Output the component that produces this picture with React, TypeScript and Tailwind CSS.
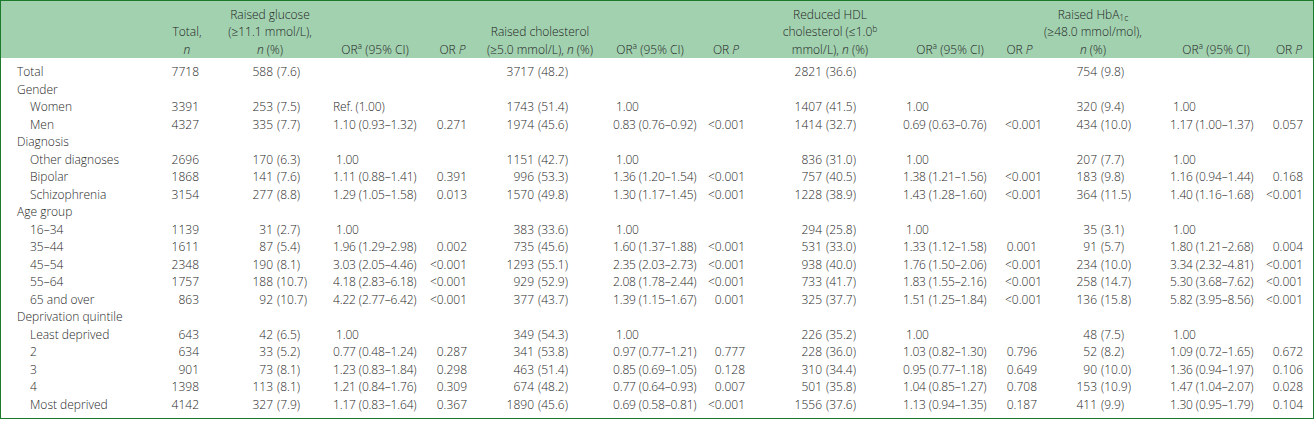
import type { ReactNode } from 'react';

type Kind = 'n' | 'np' | 'or' | 'p';

const OR = (
  <>
    OR<sup className="text-[8.5px]">a</sup> (95% CI)
  </>
);
const ORP = (
  <>
    OR <i>P</i>
  </>
);

// column widths live in the grid template; these hold per-column offsets
const cols: { head: ReactNode; hd: string; kind: Kind; cls: string }[] = [
  { head: <>Total,<br /><i>n</i></>, hd: '', kind: 'n', cls: 'text-right pr-[7px]' },
  { head: <>Raised glucose<br />(≥11.1 mmol/L),<br /><i>n</i> (%)</>, hd: 'pl-[4px]', kind: 'np', cls: 'pl-[27px]' },
  { head: OR, hd: 'pr-[5px]', kind: 'or', cls: 'pl-[3px]' },
  { head: ORP, hd: '', kind: 'p', cls: 'text-right pr-[13px]' },
  { head: <>Raised cholesterol<br />(≥5.0 mmol/L), <i>n</i> (%)</>, hd: '', kind: 'np', cls: 'pl-[14px]' },
  { head: OR, hd: '', kind: 'or', cls: 'pl-[13px]' },
  { head: ORP, hd: 'pr-[10px]', kind: 'p', cls: 'text-right pr-[17px]' },
  { head: <>Reduced HDL<br />cholesterol (≤1.0<sup className="text-[8.5px]">b</sup><br />mmol/L), <i>n</i> (%)</>, hd: 'pl-[8px]', kind: 'np', cls: 'pl-[20px]' },
  { head: OR, hd: 'pl-[5px]', kind: 'or', cls: 'pl-[13px]' },
  { head: ORP, hd: 'pr-[16px]', kind: 'p', cls: 'text-right pr-[13px]' },
  { head: <>Raised HbA<sub className="text-[8.5px]">1c</sub><br />(≥48.0 mmol/mol),<br /><i>n</i> (%)</>, hd: 'pr-[24px]', kind: 'np', cls: 'pl-[7px]' },
  { head: OR, hd: 'pl-[7px]', kind: 'or', cls: 'pl-[10px]' },
  { head: ORP, hd: '', kind: 'p', cls: 'text-right pr-[10px]' },
];

type Row = { label: string; sub?: boolean; v?: string[] };

const rows: Row[] = [
  { label: 'Total', v: ['7718', '588 (7.6)', '', '', '3717 (48.2)', '', '', '2821 (36.6)', '', '', '754 (9.8)', '', ''] },
  { label: 'Gender' },
  { label: 'Women', sub: true, v: ['3391', '253 (7.5)', 'Ref. (1.00)', '', '1743 (51.4)', '1.00', '', '1407 (41.5)', '1.00', '', '320 (9.4)', '1.00', ''] },
  { label: 'Men', sub: true, v: ['4327', '335 (7.7)', '1.10 (0.93–1.32)', '0.271', '1974 (45.6)', '0.83 (0.76–0.92)', '<0.001', '1414 (32.7)', '0.69 (0.63–0.76)', '<0.001', '434 (10.0)', '1.17 (1.00–1.37)', '0.057'] },
  { label: 'Diagnosis' },
  { label: 'Other diagnoses', sub: true, v: ['2696', '170 (6.3)', '1.00', '', '1151 (42.7)', '1.00', '', '836 (31.0)', '1.00', '', '207 (7.7)', '1.00', ''] },
  { label: 'Bipolar', sub: true, v: ['1868', '141 (7.6)', '1.11 (0.88–1.41)', '0.391', '996 (53.3)', '1.36 (1.20–1.54)', '<0.001', '757 (40.5)', '1.38 (1.21–1.56)', '<0.001', '183 (9.8)', '1.16 (0.94–1.44)', '0.168'] },
  { label: 'Schizophrenia', sub: true, v: ['3154', '277 (8.8)', '1.29 (1.05–1.58)', '0.013', '1570 (49.8)', '1.30 (1.17–1.45)', '<0.001', '1228 (38.9)', '1.43 (1.28–1.60)', '<0.001', '364 (11.5)', '1.40 (1.16–1.68)', '<0.001'] },
  { label: 'Age group' },
  { label: '16–34', sub: true, v: ['1139', '31 (2.7)', '1.00', '', '383 (33.6)', '1.00', '', '294 (25.8)', '1.00', '', '35 (3.1)', '1.00', ''] },
  { label: '35–44', sub: true, v: ['1611', '87 (5.4)', '1.96 (1.29–2.98)', '0.002', '735 (45.6)', '1.60 (1.37–1.88)', '<0.001', '531 (33.0)', '1.33 (1.12–1.58)', '0.001', '91 (5.7)', '1.80 (1.21–2.68)', '0.004'] },
  { label: '45–54', sub: true, v: ['2348', '190 (8.1)', '3.03 (2.05–4.46)', '<0.001', '1293 (55.1)', '2.35 (2.03–2.73)', '<0.001', '938 (40.0)', '1.76 (1.50–2.06)', '<0.001', '234 (10.0)', '3.34 (2.32–4.81)', '<0.001'] },
  { label: '55–64', sub: true, v: ['1757', '188 (10.7)', '4.18 (2.83–6.18)', '<0.001', '929 (52.9)', '2.08 (1.78–2.44)', '<0.001', '733 (41.7)', '1.83 (1.55–2.16)', '<0.001', '258 (14.7)', '5.30 (3.68–7.62)', '<0.001'] },
  { label: '65 and over', sub: true, v: ['863', '92 (10.7)', '4.22 (2.77–6.42)', '<0.001', '377 (43.7)', '1.39 (1.15–1.67)', '0.001', '325 (37.7)', '1.51 (1.25–1.84)', '<0.001', '136 (15.8)', '5.82 (3.95–8.56)', '<0.001'] },
  { label: 'Deprivation quintile' },
  { label: 'Least deprived', sub: true, v: ['643', '42 (6.5)', '1.00', '', '349 (54.3)', '1.00', '', '226 (35.2)', '1.00', '', '48 (7.5)', '1.00', ''] },
  { label: '2', sub: true, v: ['634', '33 (5.2)', '0.77 (0.48–1.24)', '0.287', '341 (53.8)', '0.97 (0.77–1.21)', '0.777', '228 (36.0)', '1.03 (0.82–1.30)', '0.796', '52 (8.2)', '1.09 (0.72–1.65)', '0.672'] },
  { label: '3', sub: true, v: ['901', '73 (8.1)', '1.23 (0.83–1.84)', '0.298', '463 (51.4)', '0.85 (0.69–1.05)', '0.128', '310 (34.4)', '0.95 (0.77–1.18)', '0.649', '90 (10.0)', '1.36 (0.94–1.97)', '0.106'] },
  { label: '4', sub: true, v: ['1398', '113 (8.1)', '1.21 (0.84–1.76)', '0.309', '674 (48.2)', '0.77 (0.64–0.93)', '0.007', '501 (35.8)', '1.04 (0.85–1.27)', '0.708', '153 (10.9)', '1.47 (1.04–2.07)', '0.028'] },
  { label: 'Most deprived', sub: true, v: ['4142', '327 (7.9)', '1.17 (0.83–1.64)', '0.367', '1890 (45.6)', '0.69 (0.58–0.81)', '<0.001', '1556 (37.6)', '1.13 (0.94–1.35)', '0.187', '411 (9.9)', '1.30 (0.95–1.79)', '0.104'] },
];

const grid =
  'grid grid-cols-[167px_38px_124px_95px_55px_120px_100px_62px_128px_115px_45px_110px_105px_48px]';

function Cell({ kind, cls, value }: { kind: Kind; cls: string; value: string }) {
  if (!value) return <div />;
  if (kind === 'np') {
    const [count, pct] = value.split(' ');
    return (
      <div className={`flex ${cls}`}>
        <span className="w-[40px] text-right">{count}</span>
        <span className="ml-[4px]">{pct}</span>
      </div>
    );
  }
  if (kind === 'or') {
    return (
      <div className={`whitespace-nowrap tracking-[-0.15px] ${cls}`}>
        {value === '1.00' ? <span className="ml-[3px]">{value}</span> : value}
      </div>
    );
  }
  return <div className={cls}>{value}</div>;
}

export default function App() {
  return (
    <div
      className="w-[1314px] border border-[#1b7a2b] bg-white text-[12px] font-light text-[#1f1f1f]"
      style={{ fontFamily: '"Open Sans", "Liberation Sans", sans-serif' }}
    >
      {/* Header */}
      <div className={`${grid} bg-[#a2d1b0] pt-[4.5px] leading-[17.5px]`}>
        <div />
        {cols.map((c, i) => (
          <div key={i} className={`flex items-end justify-center text-center whitespace-nowrap ${c.hd}`}>
            <div>{c.head}</div>
          </div>
        ))}
      </div>

      {/* Body */}
      <div className={`${grid} auto-rows-[17.5px] pt-[5px] pb-[5px] leading-[17.5px]`}>
        {rows.map((r) =>
          r.v ? (
            <div key={r.label} className="contents">
              <div className={r.sub ? 'pl-[29px]' : 'pl-[16px]'}>{r.label}</div>
              {cols.map((c, i) => (
                <Cell key={i} kind={c.kind} cls={c.cls} value={r.v![i]} />
              ))}
            </div>
          ) : (
            <div key={r.label} className="col-span-14 pl-[16px]">
              {r.label}
            </div>
          ),
        )}
      </div>
    </div>
  );
}
